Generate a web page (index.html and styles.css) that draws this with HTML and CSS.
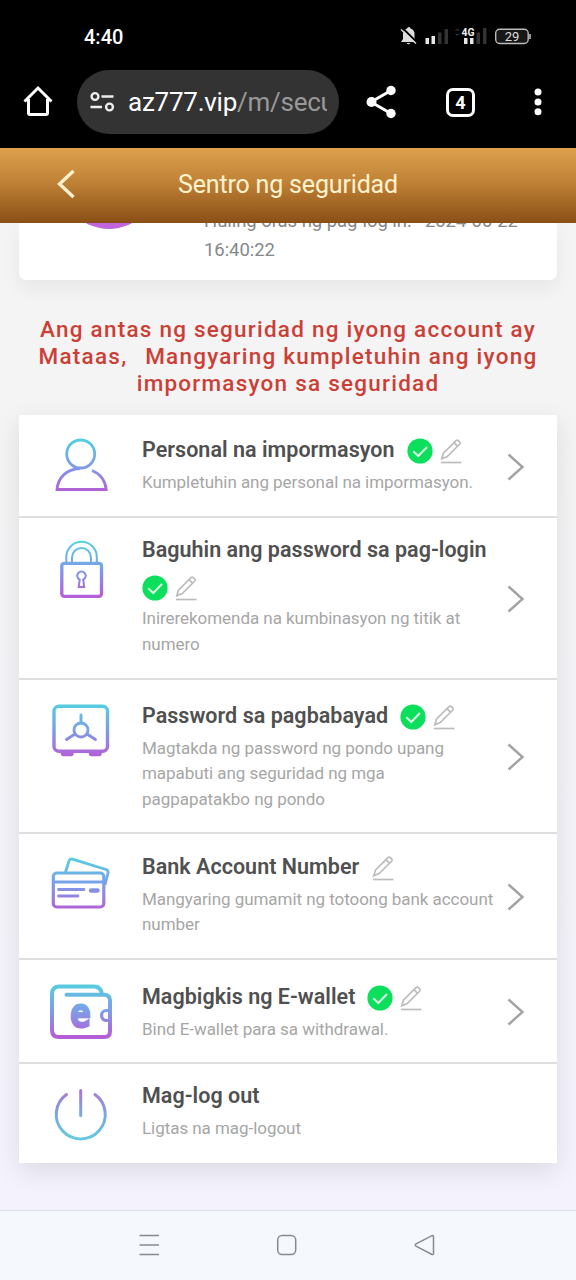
FILE: index.html
```html
<!DOCTYPE html>
<html lang="fil">
<head>
<meta charset="utf-8">
<title>Sentro ng seguridad</title>
<link rel="stylesheet" href="styles.css">
</head>
<body>
<svg class="defs" width="0" height="0" aria-hidden="true">
  <defs>
    <linearGradient id="cool" gradientUnits="userSpaceOnUse" x1="0" y1="8" x2="0" y2="60">
      <stop offset="0" stop-color="#55cfe0"/><stop offset=".5" stop-color="#7b9fe8"/><stop offset="1" stop-color="#b45fd8"/>
    </linearGradient>
    <linearGradient id="warm" gradientUnits="userSpaceOnUse" x1="0" y1="8" x2="0" y2="60">
      <stop offset="0" stop-color="#b070d4"/><stop offset=".5" stop-color="#7ca6e0"/><stop offset="1" stop-color="#62cbe0"/>
    </linearGradient>
    <symbol id="check" viewBox="0 0 26 26">
      <circle cx="13" cy="13" r="12.6" fill="#0bdf5b"/>
      <path d="M6.3 13.2l5 4.8 8.7-9" fill="none" stroke="#d9ffe5" stroke-width="2"/>
    </symbol>
    <symbol id="pencil" viewBox="0 0 22 26">
      <path d="M1.800 20.800l1.600-5.600L16.200 2.400q1-.8 2 .1l1.600 1.500q.9 1 0 2L7.200 18.600zM14 4.700l3.600 3.600" fill="none" stroke="#bcbcbc" stroke-width="1.700"/>
      <path d="M1 24.500h20.500" stroke="#bcbcbc" stroke-width="1.700"/>
    </symbol>
    <symbol id="chevron" viewBox="0 0 18 28">
      <path d="M1.500 1.500l14 12.500-14 12.500" fill="none" stroke="#a3a3a3" stroke-width="2.400"/>
    </symbol>
  </defs>
</svg>
<div class="screen">
  <div class="status">
    <span class="clock">4:40</span>
    <svg class="status-icons" width="132" height="24" viewBox="399 24 132 24">
      <path d="M401 42h15l-1.500-3v-5q0-4.500-4-5.500 0-1.500-1.500-1.500T407 28.500q-4 1-4 5.500v5z" fill="#ddd"/>
      <path d="M406.500 43h4q-2 2.500-4 0z" fill="#ddd"/>
      <path d="M402.500 28l15 15" stroke="#000" stroke-width="2"/>
      <path d="M401 29.500l15 14" stroke="#ddd" stroke-width="1.500"/>
      <path d="M425.500 38h3.500v6h-3.500zM431.500 36h3.500v8h-3.500zM464 38h3.500v6H464zM470 38h3.500v6H470z" fill="#e6e6e6"/>
      <path d="M438 32.500h3.500V44H438zM444.500 29h3.500v15h-3.500zM476.500 32.500h3.500V44h-3.500zM483 28h3.500v16H483z" fill="#333"/>
      <path d="M455.500 31l1.800-2 1.800 2M455.500 33.500l1.800 2 1.800-2" stroke="#444" fill="none"/>
      <text class="net" x="461.500" y="35.500" textLength="13" lengthAdjust="spacingAndGlyphs">4G</text>
      <rect x="495.700" y="29.200" width="32.500" height="14.300" rx="4" fill="#171717" stroke="#bbb" stroke-width="1.400"/>
      <path d="M530 34v5" stroke="#bbb" stroke-width="1.600"/>
      <text class="battery" x="512" y="41" text-anchor="middle">29</text>
    </svg>
  </div>
  <div class="browser">
    <svg class="home" width="30" height="32" viewBox="0 0 30 32"><path d="M5.500 14v14q0 1.500 1.500 1.500h16q1.500 0 1.500-1.500V14M1.500 16.500L15 3l13.500 13.500" fill="none" stroke="#fff" stroke-width="3"/></svg>
    <div class="address">
      <svg width="26" height="22" viewBox="0 0 26 22" fill="none" stroke="#eee" stroke-width="2.400"><circle cx="5" cy="5.500" r="3.400"/><path d="M11.500 5.500H23.500M.5 16H12"/><circle cx="19.500" cy="16" r="3.400"/></svg>
      <span class="url">az777.vip<span class="path">/m/secu</span></span>
    </div>
    <svg class="share" width="32" height="34" viewBox="0 0 32 34"><path d="M26 5.500L6 17l20 11.500" fill="none" stroke="#fff" stroke-width="3"/><g fill="#fff"><circle cx="26" cy="5.500" r="4.700"/><circle cx="6.500" cy="17" r="5"/><circle cx="26" cy="28.500" r="4.700"/></g></svg>
    <span class="tabs">4</span>
    <svg class="more" width="8" height="28" viewBox="0 0 8 28" fill="#fff"><circle cx="4" cy="4" r="3.500"/><circle cx="4" cy="14" r="3.500"/><circle cx="4" cy="23.700" r="3.500"/></svg>
  </div>
  <header class="header">
    <svg class="back" width="20" height="32" viewBox="0 0 20 32"><path d="M17.500 3L3.500 16l14 13" fill="none" stroke="#fff3cf" stroke-width="3.300"/></svg>
    <h1>Sentro ng seguridad</h1>
  </header>
  <main class="content">
    <section class="profile">
      <div class="avatar"></div>
      <p>Huling oras ng pag-log in:&nbsp;&nbsp; 2024-06-22<br>16:40:22</p>
    </section>
    <p class="notice">Ang antas ng seguridad ng iyong account ay<br>Mataas<span class="comma">,</span>Mangyaring kumpletuhin ang iyong<br>impormasyon sa seguridad</p>
    <section class="list">
      <article class="row info">
        <svg class="icon" viewBox="0 0 70 66"><circle cx="34.700" cy="23" r="14"/><path d="M34 37.500C20 38 12 47 11 58.500H60.200C59 49 53.500 42.500 46 39.500"/></svg>
        <div class="text"><h2>Personal na impormasyon<svg class="check"><use href="#check"/></svg><svg class="pencil"><use href="#pencil"/></svg></h2><p>Kumpletuhin ang personal na impormasyon.</p></div>
        <svg class="chevron"><use href="#chevron"/></svg>
      </article>
      <article class="row login">
        <svg class="icon" viewBox="0 0 70 66"><rect x="15.800" y="29.300" width="39.700" height="33" rx="2.500" stroke-width="3.300"/><path d="M20.300 29v-6a15 15 0 0 1 30.500 0v6M26 29v-5.500a9.500 9.500 0 0 1 19 0V29" stroke-width="2"/><path d="M33.700 45.500a4.200 4.200 0 1 1 3.500 0l1 7.500h-5.500z" stroke-width="2"/></svg>
        <div class="text"><h2>Baguhin ang password sa pag-login<br><svg class="check"><use href="#check"/></svg><svg class="pencil"><use href="#pencil"/></svg></h2><p>Inirerekomenda na kumbinasyon ng titik at<br>numero</p></div>
        <svg class="chevron"><use href="#chevron"/></svg>
      </article>
      <article class="row fund">
        <svg class="icon" viewBox="0 0 70 66"><rect x="8" y="10.300" width="53.500" height="45" rx="5" stroke-width="3.400"/><circle cx="35" cy="34" r="7"/><path d="M35 27v-8M29 38l-8.500 5.500M41 38l8.500 5.500" stroke-width="3" stroke-linecap="round"/><path d="M17.500 57.500h7.500M45.500 57.500h7.500" stroke-width="5.500" stroke-linecap="round"/></svg>
        <div class="text"><h2>Password sa pagbabayad<svg class="check"><use href="#check"/></svg><svg class="pencil"><use href="#pencil"/></svg></h2><p>Magtakda ng password ng pondo upang<br>mapabuti ang seguridad ng mga<br>pagpapatakbo ng pondo</p></div>
        <svg class="chevron"><use href="#chevron"/></svg>
      </article>
      <article class="row bank">
        <svg class="icon" viewBox="0 0 70 66"><rect x="7.300" y="23" width="50.500" height="34" rx="3.500" stroke-width="3.200"/><path d="M7 32h51"/><path d="M19.500 22L23 11q1-2.500 3.500-1.800L60 19.500q2.500 1 2 3.500L59 35"/><path d="M12.500 39.500H38M12.500 46H32" stroke-width="2.800" stroke-linecap="round"/><path d="M45 40.500h6.500" stroke-width="4.500" stroke-linecap="round"/></svg>
        <div class="text"><h2>Bank Account Number<svg class="pencil"><use href="#pencil"/></svg></h2><p>Mangyaring gumamit ng totoong bank account<br>number</p></div>
        <svg class="chevron"><use href="#chevron"/></svg>
      </article>
      <article class="row wallet">
        <svg class="icon" viewBox="0 0 70 66"><path d="M20.500 18.700H58q6 0 6 6V34M64 44v11.500q0 5.500-5.500 5.500H13q-7 0-7-7V18q0-7.500 7.500-7.500H48q7 0 8 8M64 24v31" stroke-width="4" stroke-linecap="round"/><path d="M64 34.500h-3.500a5 5 0 0 0 0 10H64" stroke-width="3.200"/><text class="e-mark" x="24" y="50.800" textLength="21" lengthAdjust="spacingAndGlyphs">e</text></svg>
        <div class="text"><h2>Magbigkis ng E-wallet<svg class="check"><use href="#check"/></svg><svg class="pencil"><use href="#pencil"/></svg></h2><p>Bind E-wallet para sa withdrawal.</p></div>
        <svg class="chevron"><use href="#chevron"/></svg>
      </article>
      <article class="row logout">
        <svg class="icon" viewBox="0 0 70 66"><path d="M20.500 14.500a24.500 24.500 0 1 0 28.500 0M34.700 10.500v25" stroke-width="3" stroke-linecap="round"/></svg>
        <div class="text"><h2>Mag-log out</h2><p>Ligtas na mag-logout</p></div>
      </article>
    </section>
  </main>
  <nav class="nav">
    <svg width="22" height="22" viewBox="0 0 22 22"><path d="M1.500 1.500h19.500M1.500 11h19.500M1.500 20.500h19.500"/></svg>
    <svg width="22" height="22" viewBox="0 0 22 22"><rect x="1.700" y="1.500" width="18" height="19" rx="4.500"/></svg>
    <svg width="22" height="22" viewBox="0 0 22 22"><path d="M2 9.800L18 1.700q1.500-.5 1.500 1v16.800q0 1.500-1.500 1L2 12.200q-1.500-1.200 0-2.400z"/></svg>
  </nav>
</div>
</body>
</html>
```
FILE: styles.css
```css
* { box-sizing: border-box; }
body { margin: 0; font-family: Roboto, "Liberation Sans", sans-serif; }
h1, h2, p { margin: 0; font-weight: 400; }
svg { display: block; flex: none; }
.defs { position: absolute; }
.screen { width: 576px; height: 1280px; display: flex; flex-direction: column; overflow: hidden; }
.status { height: 72px; flex: none; background: #000; color: #fff; display: flex; align-items: center; justify-content: space-between; padding: 0 45px 0 84px; }
.clock { font-size: 20px; font-weight: 500; line-height: 24px; padding-top: 1px; }
.net { font: 700 11px Roboto, sans-serif; fill: #eee; }
.battery { font: 400 13px Roboto, sans-serif; fill: #ddd; }
.browser { height: 76px; flex: none; background: #000; display: flex; align-items: center; padding: 0 34px 16px 23px; color: #fff; }
.home { margin-top: -2px; }
.address { width: 262px; height: 64px; margin-left: 24px; border-radius: 32px; background: #333; display: flex; align-items: center; padding: 0 12px 0 13px; gap: 12px; margin-top: -1px; }
.url { flex: 1; overflow: hidden; white-space: nowrap; font-size: 26px; line-height: 36px; letter-spacing: -.25px; padding-top: 1px; }
.path { color: #999; }
.share { margin-left: 26px; }
.tabs { width: 29px; height: 29px; margin-left: 49px; border: 3px solid #fff; border-radius: 7px; font-size: 18px; font-weight: 700; line-height: 24px; text-align: center; }
.more { margin-left: auto; }
.header { height: 75px; flex: none; background: linear-gradient(#dda04c, #c08236 45%, #8a4f17); display: flex; align-items: center; position: relative; z-index: 1; }
.back { margin: -3px 0 0 56px; }
.header h1 { margin: -1px 0 0 102px; color: #fff3cf; font-size: 25px; line-height: 32px; letter-spacing: -.17px; white-space: nowrap; }
.content { flex: 1; padding: 0 19px; background: linear-gradient(#f4f4f4 0 20%, #f4f2fc 90%); }
.profile { height: 57px; background: #fff; border-radius: 0 0 7px 7px; box-shadow: 0 8px 20px rgba(0,0,0,.06); overflow: hidden; display: flex; align-items: flex-end; }
.avatar { width: 96px; height: 96px; border-radius: 50%; background: #c265dc; margin: 0 47px 51px 42px; flex: none; }
.profile p { color: #888; font-size: 18.500px; line-height: 29px; letter-spacing: -.05px; padding-bottom: 15px; white-space: nowrap; }
.notice { height: 135px; padding-top: 36px; color: #cc3f36; font-size: 22.500px; font-weight: 500; line-height: 27px; letter-spacing: 1.230px; text-align: center; white-space: nowrap; }
.comma { display: inline-block; width: 24px; text-align: left; }
.list { display: flex; flex-direction: column; gap: 2px; background: #dedede; box-shadow: 0 8px 25px rgba(0,0,0,.1); }
.row { background: #fff; display: flex; padding: 16px 32px 0 27px; }
.info { height: 101px; }
.login { height: 160px; }
.fund { height: 152px; }
.bank { height: 124px; }
.wallet { height: 102px; }
.logout { height: 99px; }
.icon { width: 70px; height: 66px; fill: none; stroke: url(#cool); stroke-width: 2.800; }
.logout .icon { stroke: url(#warm); }
.e-mark { font: 700 41px "DejaVu Sans", sans-serif; fill: url(#cool); stroke: url(#cool); stroke-width: 1.800; }
.text { flex: 1; margin-left: 26px; white-space: nowrap; }
.login .text { margin-top: -3px; }
.fund .text { margin-top: 1px; }
.bank .text { margin-top: -2px; }
.wallet .text { margin-top: 2px; }
.logout .text { margin-top: -3px; }
.text h2 { font-size: 21.500px; font-weight: 600; line-height: 38.500px; letter-spacing: .03px; color: #505050; }
.login .text h2 { line-height: 37.500px; }
.text p { color: #a6a6a6; font-size: 17px; line-height: 25.500px; letter-spacing: -.05px; }
.check { display: inline-block; width: 26px; height: 26px; vertical-align: middle; margin-left: 12px; }
.pencil { display: inline-block; width: 22px; height: 26px; vertical-align: middle; margin-left: 7px; }
.login .check { margin-left: 0; }
.login .check, .login .pencil { margin-bottom: 2px; }
.bank .pencil { margin-left: 13px; }
.chevron { width: 18px; height: 28px; align-self: center; margin-top: -14px; }
.nav { height: 70px; flex: none; border-top: 1px solid #dadfe8; background: #f5f9fe; display: flex; padding: 23px 0 0 138px; gap: 116px; fill: none; stroke: #858a90; stroke-width: 1.500; }
```
